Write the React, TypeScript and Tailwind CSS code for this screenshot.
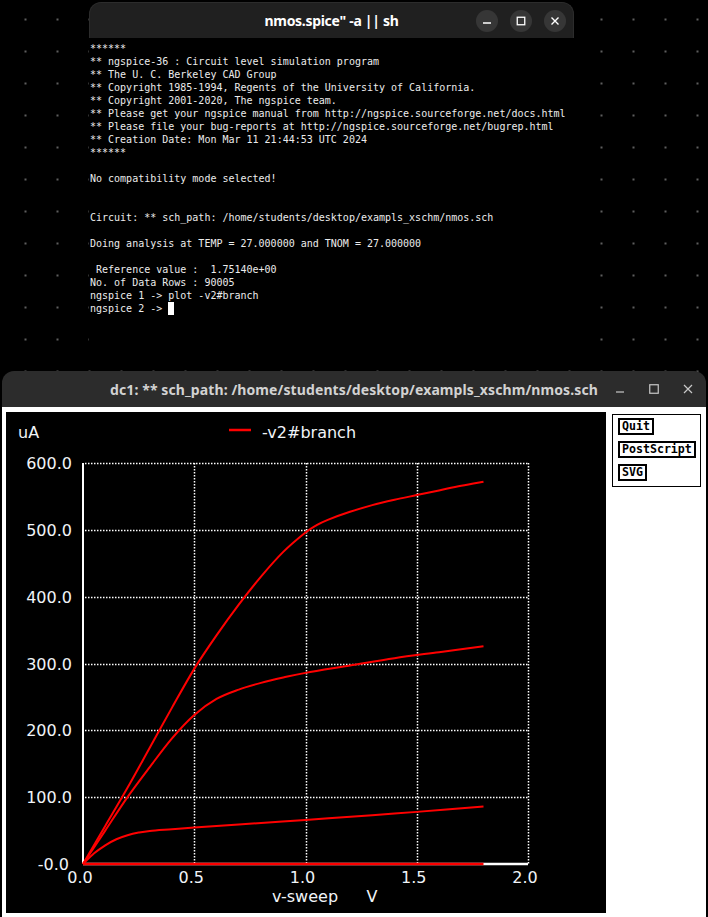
import React from "react";

const termLines = [
  "******",
  "** ngspice-36 : Circuit level simulation program",
  "** The U. C. Berkeley CAD Group",
  "** Copyright 1985-1994, Regents of the University of California.",
  "** Copyright 2001-2020, The ngspice team.",
  "** Please get your ngspice manual from http://ngspice.sourceforge.net/docs.html",
  "** Please file your bug-reports at http://ngspice.sourceforge.net/bugrep.html",
  "** Creation Date: Mon Mar 11 21:44:53 UTC 2024",
  "******",
  "",
  "No compatibility mode selected!",
  "",
  "",
  "Circuit: ** sch_path: /home/students/desktop/exampls_xschm/nmos.sch",
  "",
  "Doing analysis at TEMP = 27.000000 and TNOM = 27.000000",
  "",
  " Reference value :  1.75140e+00",
  "No. of Data Rows : 90005",
  "ngspice 1 -> plot -v2#branch",
];

// drain current curves, (volts, microamps)
const curves: number[][][] = [
  [
    [0, 0], [0.1, 57], [0.2, 114], [0.3, 174], [0.4, 234], [0.5, 292], [0.6, 342],
    [0.7, 388], [0.8, 430], [0.9, 467], [1.0, 496], [1.05, 507], [1.1, 515], [1.2, 527],
    [1.3, 537], [1.4, 545], [1.5, 552], [1.6, 559], [1.7, 566], [1.8, 572],
  ],
  [
    [0, 0], [0.1, 50], [0.2, 100], [0.3, 145], [0.4, 188], [0.5, 223], [0.6, 247],
    [0.7, 261], [0.8, 271], [0.9, 279], [1.0, 286], [1.2, 297], [1.4, 308], [1.6, 317],
    [1.8, 326],
  ],
  [
    [0, 0], [0.05, 16], [0.1, 28], [0.15, 37], [0.2, 43], [0.25, 47], [0.3, 49.5],
    [0.4, 52], [0.5, 54.5], [0.7, 59], [1.0, 66], [1.3, 73], [1.5, 78], [1.8, 86],
  ],
];

const X = (v: number) => 77 + v * 222.5;
const Y = (i: number) => 452 - i * 0.6683;

function smoothPath(data: number[][]) {
  const p = data.map(([v, i]) => [X(v), Y(i)]);
  let d = `M${p[0][0]},${p[0][1]}`;
  for (let k = 0; k < p.length - 1; k++) {
    const p0 = p[k - 1] ?? p[k];
    const p1 = p[k];
    const p2 = p[k + 1];
    const p3 = p[k + 2] ?? p2;
    const c1x = p1[0] + (p2[0] - p0[0]) / 6;
    const c1y = p1[1] + (p2[1] - p0[1]) / 6;
    const c2x = p2[0] - (p3[0] - p1[0]) / 6;
    const c2y = p2[1] - (p3[1] - p1[1]) / 6;
    d += ` C${c1x},${c1y} ${c2x},${c2y} ${p2[0]},${p2[1]}`;
  }
  return d;
}

const labelFont = { fontFamily: "'DejaVu Sans', sans-serif", fontSize: 16 };

function Plot() {
  const yTicks = [100, 200, 300, 400, 500, 600];
  const xTicks = [0.5, 1.0, 1.5, 2.0];
  return (
    <svg width={600} height={501} className="shrink-0 bg-black">
      <text x={12} y={26} fill="#f0f4f8" style={labelFont}>uA</text>
      <line x1={223} y1={18} x2={245} y2={18} stroke="#ff0000" strokeWidth={2.5} />
      <text x={256} y={26} fill="#f0f4f8" style={labelFont}>-v2#branch</text>

      {yTicks.map((t) => (
        <line
          key={t}
          x1={X(0) + 2}
          x2={X(2)}
          y1={Math.round(Y(t)) + 0.5}
          y2={Math.round(Y(t)) + 0.5}
          stroke="#ffffff"
          strokeWidth={1.5}
          strokeDasharray="1.5 1.5"
        />
      ))}
      {xTicks.map((t) => (
        <line
          key={t}
          x1={Math.round(X(t)) + 0.5}
          x2={Math.round(X(t)) + 0.5}
          y1={Y(600)}
          y2={Y(0)}
          stroke="#ffffff"
          strokeWidth={1.5}
          strokeDasharray="1.5 1.5"
        />
      ))}
      <line x1={X(0)} y1={Y(600)} x2={X(0)} y2={Y(0)} stroke="#ffffff" strokeWidth={2} />
      <line x1={X(0)} y1={Y(0)} x2={X(2)} y2={Y(0)} stroke="#ffffff" strokeWidth={2.5} />

      {[0, ...yTicks].map((t) => (
        <text
          key={t}
          x={t === 0 ? 63 : 66}
          y={Y(t) + 6}
          textAnchor="end"
          fill="#f0f4f8"
          style={labelFont}
        >
          {t === 0 ? "-0.0" : `${t}.0`}
        </text>
      ))}
      {[0, ...xTicks].map((t) => (
        <text
          key={t}
          x={X(t) - 3}
          y={471}
          textAnchor="middle"
          fill="#f0f4f8"
          style={labelFont}
        >
          {t.toFixed(1)}
        </text>
      ))}
      <text x={299} y={490} textAnchor="middle" fill="#f0f4f8" style={labelFont}>v-sweep</text>
      <text x={366} y={490} textAnchor="middle" fill="#f0f4f8" style={labelFont}>V</text>

      <line x1={X(0)} y1={Y(0)} x2={X(1.8)} y2={Y(0)} stroke="#ff0000" strokeWidth={2.5} />
      {curves.map((c, n) => (
        <path key={n} d={smoothPath(c)} fill="none" stroke="#ff0000" strokeWidth={2} />
      ))}
    </svg>
  );
}

function PlotButton({ label }: { label: string }) {
  return (
    <button className="border-2 border-black bg-white px-[2px] font-['DejaVu_Sans_Mono',monospace] text-[11.6px] font-bold leading-[13px] text-black">
      {label}
    </button>
  );
}

export default function App() {
  return (
    <div className="relative h-[917px] w-[708px] overflow-hidden bg-black bg-[radial-gradient(circle,#5e5e5e_0.8px,transparent_1.1px)] bg-[length:32px_32px] bg-[position:9.5px_3.5px]">
      {/* terminal */}
      <div className="absolute left-[89px] top-[2px] w-[485px]">
        <div className="grid h-[36px] grid-cols-[1fr_auto_1fr] items-center rounded-t-[12px] border border-b-0 border-[#2c2c2c] bg-[#202020]">
          <div />
          <div className="font-['Noto_Sans',sans-serif] text-[14px] font-bold tracking-[-0.3px] text-white">
            nmos.spice" -a || sh
          </div>
          <div className="flex justify-end gap-[12px] pr-[7px]">
            <span className="flex h-[22px] w-[22px] items-center justify-center rounded-full bg-[#363636]">
              <svg width="10" height="10" viewBox="0 0 10 10">
                <line x1="1" y1="7" x2="9" y2="7" stroke="#fff" strokeWidth="1.5" />
              </svg>
            </span>
            <span className="flex h-[22px] w-[22px] items-center justify-center rounded-full bg-[#363636]">
              <svg width="10" height="10" viewBox="0 0 10 10">
                <rect x="1.25" y="1.25" width="7.5" height="7.5" fill="none" stroke="#fff" strokeWidth="1.3" />
              </svg>
            </span>
            <span className="flex h-[22px] w-[22px] items-center justify-center rounded-full bg-[#363636]">
              <svg width="10" height="10" viewBox="0 0 10 10">
                <path d="M1.5 1.5 L8.5 8.5 M8.5 1.5 L1.5 8.5" stroke="#fff" strokeWidth="1.4" />
              </svg>
            </span>
          </div>
        </div>
        <div className="h-[325px] whitespace-pre bg-black pl-[1px] pt-[4px] font-['DejaVu_Sans_Mono',monospace] text-[10px] leading-[13px] text-[#ececec]">
          {termLines.map((l, i) => (
            <div key={i} className="h-[13px]">{l}</div>
          ))}
          <div className="h-[13px]">
            ngspice 2 -&gt; <span className="inline-block h-[13px] w-[6px] bg-white align-top" />
          </div>
        </div>
      </div>

      {/* plot window */}
      <div className="absolute left-[2px] top-[371px] w-[704px]">
        <div className="grid h-[36px] grid-cols-[1fr_auto_1fr] items-center rounded-t-[12px] bg-[#2c2c2c]">
          <div />
          <div className="font-['Noto_Sans',sans-serif] text-[14px] font-bold tracking-[0.1px] text-[#d2d2d2]">
            dc1: ** sch_path: /home/students/desktop/exampls_xschm/nmos.sch
          </div>
          <div className="flex justify-end gap-[10px] pr-[6px]">
            <span className="flex h-[24px] w-[24px] items-center justify-center">
              <svg width="10" height="10" viewBox="0 0 10 10">
                <line x1="1" y1="8" x2="9" y2="8" stroke="#c8c8c8" strokeWidth="1.2" />
              </svg>
            </span>
            <span className="flex h-[24px] w-[24px] items-center justify-center">
              <svg width="10" height="10" viewBox="0 0 10 10">
                <rect x="0.75" y="0.75" width="8.5" height="8.5" fill="none" stroke="#c8c8c8" strokeWidth="1.2" />
              </svg>
            </span>
            <span className="flex h-[24px] w-[24px] items-center justify-center">
              <svg width="10" height="10" viewBox="0 0 10 10">
                <path d="M1 1 L9 9 M9 1 L1 9" stroke="#c8c8c8" strokeWidth="1.2" />
              </svg>
            </span>
          </div>
        </div>
        <div className="flex h-[520px] bg-white pl-[4px] pt-[5px]">
          <Plot />
          <div className="ml-[6px] mt-[2px] flex h-fit w-[89px] flex-col items-start gap-[6px] border border-black px-[5px] pb-[5px] pt-[3px]">
            <PlotButton label="Quit" />
            <PlotButton label="PostScript" />
            <PlotButton label="SVG" />
          </div>
        </div>
      </div>
    </div>
  );
}
